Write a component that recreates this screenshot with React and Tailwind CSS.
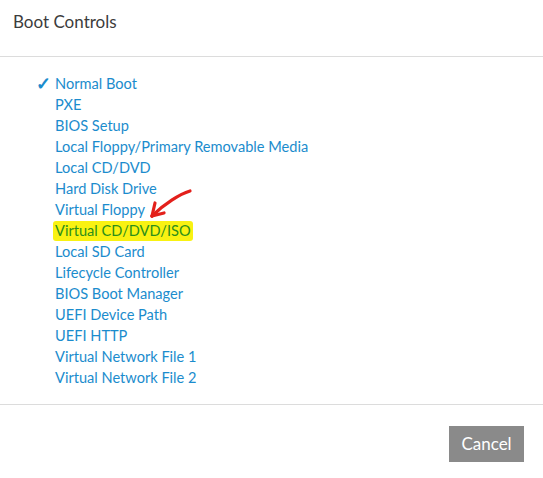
import { useState } from "react";

const bootOptions = [
  "Normal Boot",
  "PXE",
  "BIOS Setup",
  "Local Floppy/Primary Removable Media",
  "Local CD/DVD",
  "Hard Disk Drive",
  "Virtual Floppy",
  "Virtual CD/DVD/ISO",
  "Local SD Card",
  "Lifecycle Controller",
  "BIOS Boot Manager",
  "UEFI Device Path",
  "UEFI HTTP",
  "Virtual Network File 1",
  "Virtual Network File 2",
];

// hand-drawn red marker pointing at the highlighted entry
function MarkerArrow() {
  return (
    <svg
      className="absolute left-[104px] top-[-40px] pointer-events-none"
      width="60"
      height="45"
      viewBox="0 0 60 45"
      fill="none"
      stroke="#e3201b"
      strokeWidth="3.2"
      strokeLinecap="round"
      strokeLinejoin="round"
    >
      <path d="M50 11 C 40 14, 24 24, 12 36" />
      <path d="M12 36 L 15 23" />
      <path d="M12 36 L 24 33" />
    </svg>
  );
}

function App() {
  const [selected] = useState("Normal Boot");

  return (
    <div className="w-[543px] h-[478px] bg-white font-['Lato','Open_Sans',sans-serif] overflow-hidden">
      <header className="h-[57px] border-b border-[#dcdcdc] px-[13px] pt-[12px]">
        <h1 className="text-[17px] leading-[20px] text-[#3c3c3c]">Boot Controls</h1>
      </header>

      <main className="h-[348px] border-b border-[#dcdcdc] pt-[16px] pl-[36px]">
        <ul className="text-[14.6px] leading-[21px] text-[#1b8ccd]">
          {bootOptions.map((opt) => (
            <li key={opt} className="relative flex items-center h-[21px]">
              <span className="w-[19px] text-[18px] font-bold">{opt === selected ? "✓" : ""}</span>
              {opt === "Virtual CD/DVD/ISO" ? (
                <>
                  <span className="-ml-[2px] px-[2px] bg-[#f9f212] text-[#2c8f1a] rounded-[3px] leading-[20px]">
                    {opt}
                  </span>
                  <MarkerArrow />
                </>
              ) : (
                <span>{opt}</span>
              )}
            </li>
          ))}
        </ul>
      </main>

      <footer className="flex justify-end pt-[21px] pr-[19px]">
        <button className="w-[75px] h-[36px] bg-[#8a8a8a] text-white text-[17px]">Cancel</button>
      </footer>
    </div>
  );
}

export default App;
